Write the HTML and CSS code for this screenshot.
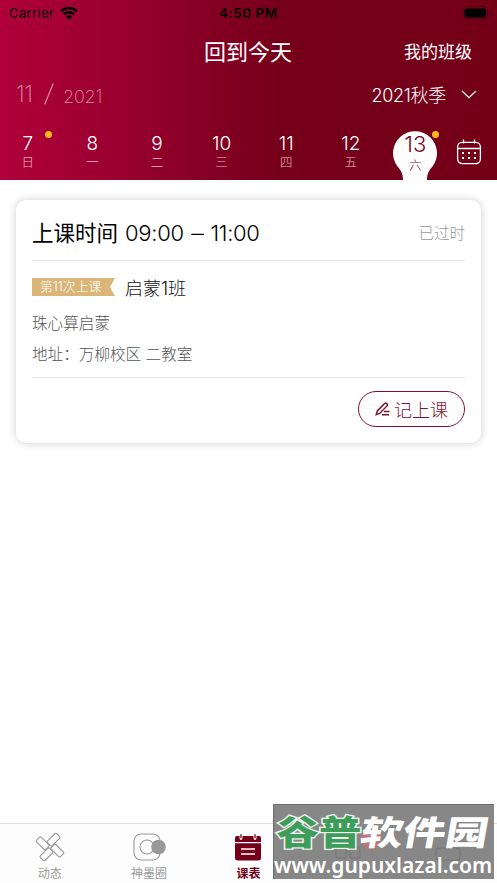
FILE: index.html
```html
<!DOCTYPE html>
<html lang="zh-CN">
<head>
<meta charset="utf-8">
<title>课表</title>
<link rel="stylesheet" href="styles.css">
</head>
<body>
<div class="app">
  <header class="header">
    <div class="status">
      <div class="carrier"><span>Carrier</span>
        <svg width="18" height="14" viewBox="0 0 18 14"><g fill="none" stroke="#000" stroke-width="2.600"><path d="M1 5.200a11.500 11.500 0 0 1 16 0"/><path d="M3.900 8.500a7.300 7.300 0 0 1 10.200 0"/></g><path d="M6 10.700a4.300 4.300 0 0 1 6 0L9 13.700z"/></svg>
      </div>
      <div class="clock">4:50 PM</div>
      <svg class="battery" width="29" height="14" viewBox="0 0 29 14"><rect x=".6" y=".6" width="25" height="12.400" rx="3.600" fill="none" stroke="#4c0010"/><rect x="2.500" y="2.400" width="21.500" height="9" rx="2"/><path d="M27.300 5v4q1.500-.6 1.500-2t-1.500-2" fill="#4c0010"/></svg>
    </div>
    <div class="titlebar"><h1>回到今天</h1><span class="myclass">我的班级</span></div>
    <div class="monthbar">
      <div class="month"><span class="m">11</span><svg width="10" height="22" viewBox="0 0 10 22"><path d="M.7 21.500 9.200.5" stroke="#d98ca3" stroke-width="1.200"/></svg><span class="y">2021</span></div>
      <div class="term"><span>2021秋季</span><svg width="16" height="9" viewBox="0 0 16 9"><path d="m1 1 7 6.700L15 1" fill="none" stroke="#fff" stroke-width="1.200"/></svg></div>
    </div>
    <div class="days">
      <div class="day"><b>7</b><i>日</i><span class="dot"></span></div>
      <div class="day"><b>8</b><i>一</i></div>
      <div class="day"><b>9</b><i>二</i></div>
      <div class="day"><b>10</b><i>三</i></div>
      <div class="day"><b>11</b><i>四</i></div>
      <div class="day"><b>12</b><i>五</i></div>
      <div class="day selected"><svg class="bubble" width="46" height="50" viewBox="0 0 46 50"><path d="M11 50C11 43 8.500 40 5.500 36.500A22 22 0 1 1 40.500 36.500C37.500 40 35 43 35 50Z" fill="#fff"/></svg><b>13</b><i>六</i><span class="dot"></span></div>
      <svg class="cal" width="26" height="26" viewBox="0 0 26 26"><g fill="none" stroke="#fff" stroke-width="1.300"><rect x="1.600" y="3.400" width="22.800" height="21.200" rx="4.500"/><path d="M1.600 9.500h22.800M7.500.6v4M18.500.6v4"/></g><g fill="#fff"><path d="M6 13h2v2H6zM12 13h2v2h-2zM18 13h2v2h-2zM6 18h2v2H6zM12 18h2v2h-2zM18 18h2v2h-2z"/></g></svg>
    </div>
  </header>
  <main class="content">
    <section class="card">
      <div class="time"><h2><span class="zh">上课时间</span>09:00<span class="dash">–</span>11:00</h2><span class="past">已过时</span></div>
      <div class="info">
        <div class="course"><span class="tag">第11次上课</span><span class="name">启蒙1班</span></div>
        <p>珠心算启蒙</p>
        <p>地址：万柳校区 二教室</p>
      </div>
      <div class="actions"><button class="record"><svg width="15" height="14" viewBox="0 0 15 14"><g fill="none" stroke="#7d1230" stroke-width="1.500"><path d="M1.200 12.600 2.300 8.900 9.600 1.500Q10.600.6 11.700 1.600T12 3.900L4.700 11.400ZM9 9.500h5.500M6.800 12.800H14"/></g></svg>记上课</button></div>
    </section>
  </main>
  <nav class="tabs">
    <div class="tab"><svg width="30" height="30" viewBox="0 0 30 30"><g fill="none" stroke="#999" stroke-width="1.100"><rect x="-6.500" y="-3.300" width="13" height="6.600" rx="1.400" transform="translate(7.700 11.300) rotate(45)"/><rect x="-6.500" y="-3.300" width="13" height="6.600" rx="1.400" transform="translate(18.500 7.700) rotate(-45)"/><rect x="-6.500" y="-3.300" width="13" height="6.600" rx="1.400" transform="translate(22.300 18.700) rotate(45)"/><rect x="-6.500" y="-3.300" width="13" height="6.600" rx="1.400" transform="translate(11.500 22.300) rotate(-45)"/></g></svg><span>动态</span></div>
    <div class="tab"><svg width="34" height="30" viewBox="0 0 34 30"><g fill="none" stroke="#999" stroke-width="1.100"><rect x="2" y="2" width="26" height="26" rx="7"/><circle cx="15" cy="15" r="7"/></g><circle cx="26.500" cy="15" r="7.300" fill="#999"/></svg><span>神墨圈</span></div>
    <div class="tab active"><svg width="28" height="30" viewBox="0 0 28 30"><path d="M3 4h2.500v2q0 2 1.500 2t1.500-2V4h11v2q0 2 1.500 2t1.500-2V4H25q2 0 2 2v4H1V6q0-2 2-2M1 11.200h26V26q0 2.500-3 2.500H4q-3 0-3-2.500z" fill="#76001a"/><path d="M7 2.200v4M21 2.200v4" stroke="#76001a" stroke-width="1.300"/><path d="M7 17h14M7 22h14" stroke="#fff" stroke-width="1.300"/></svg><span>课表</span></div>
    <div class="tab"></div>
    <div class="tab"></div>
  </nav>
  <div class="watermark">
    <svg class="ghost" width="221" height="75" viewBox="0 0 221 75"><g fill="none" stroke="#777" stroke-width="1.200"><rect x="62" y="30" width="10" height="10" rx="2"/><rect x="62" y="43" width="10" height="10" rx="2"/><rect x="76" y="43" width="10" height="10" rx="2"/><rect x="162" y="43" width="24" height="12" rx="3"/></g><circle cx="97" cy="34" r="10.500" fill="#b87777"/></svg>
    <div class="brand"><span class="green">谷普</span><span class="white">软件园</span></div>
    <div class="url">www.gupuxlazal.com</div>
  </div>
</div>
</body>
</html>
```
FILE: styles.css
```css
* { box-sizing: border-box; }
body { margin: 0; background: #fff; font-family: Inter, "Noto Sans CJK SC", sans-serif; font-weight: 300; }
h1, h2, p { margin: 0; font-weight: 300; }
svg { display: block; flex: none; }
.app { position: relative; width: 497px; height: 883px; display: flex; flex-direction: column; overflow: hidden; }
.header { height: 180px; flex: none; background: linear-gradient(90deg, #b0003b 0%, #99002f 24%, #76001a 56%, #740018 100%); color: #fff; }
.status { height: 26px; padding: 0 6px 0 9px; display: grid; grid-template-columns: 210px 1fr auto; align-items: center; color: #000; font-size: 13px; font-weight: 400; }
.carrier { display: flex; gap: 6px; align-items: center; letter-spacing: .4px; }
.clock { font-weight: 600; font-size: 13.500px; letter-spacing: .5px; }
.battery { justify-self: end; }
.titlebar { height: 52px; padding-right: 25px; display: grid; grid-template-columns: 204px 1fr auto; align-items: center; }
.titlebar h1 { grid-column: 2; font-size: 22px; line-height: 52px; font-weight: 400; }
.myclass { font-size: 17px; font-weight: 400; line-height: 52px; align-self: start; }
.monthbar { height: 34px; padding: 0 20px 2px 16px; display: flex; justify-content: space-between; align-items: center; }
.month { display: flex; align-items: center; color: #d98ca3; font-weight: 200; }
.m { font-size: 23px; width: 28px; letter-spacing: -.5px; }
.y { font-size: 18px; margin: 4px 0 0 9px; letter-spacing: -.2px; }
.term { display: flex; align-items: center; gap: 15px; font-size: 18px; letter-spacing: -.3px; }
.days { height: 68px; padding: 19px 6px 0 0; margin-left: -4.500px; display: grid; grid-template-columns: repeat(7, 64.600px) 1fr; }
.day { position: relative; display: flex; flex-direction: column; align-items: center; }
.day b { font-size: 19px; line-height: 25px; font-weight: 350; position: relative; }
.day i { font-size: 12.500px; line-height: 13px; font-style: normal; color: #e6bac6; position: relative; }
.dot { position: absolute; left: 49px; top: 0; width: 7px; height: 7px; border-radius: 50%; background: #fcb81c; }
.bubble { position: absolute; left: 9px; top: -1px; }
.selected { color: #76001a; }
.selected b { font-size: 22px; line-height: 27px; }
.selected i { color: #76001a; line-height: 16px; }
.cal { justify-self: center; margin-top: 8px; }
.content { flex: 1; padding: 20px 16px; }
.card { height: 243px; padding: 0 16px; border-radius: 10px; background: #fff; box-shadow: 0 0 9px rgba(0,0,0,.2); color: #333; }
.time { height: 61px; padding-top: 3px; border-bottom: 1px solid #e6e6e6; display: flex; justify-content: space-between; align-items: center; }
.time h2 { font-size: 22px; color: #000; font-weight: 350; letter-spacing: -.3px; }
.zh { font-size: 21.500px; font-weight: 400; margin-right: 7px; letter-spacing: 0; }
.dash { display: inline-block; margin: 0 8px; transform: scaleX(1.150); }
.past { font-size: 15.500px; color: #999; }
.info { height: 117px; padding-top: 13px; border-bottom: 1px solid #e6e6e6; }
.course { display: flex; align-items: center; height: 26px; gap: 10px; margin-bottom: 8px; }
.tag { width: 83px; height: 18px; padding-left: 8px; font-size: 12.800px; line-height: 18px; color: #fff; background: #d9b577; clip-path: polygon(0 0, 100% 0, 94% 50%, 100% 100%, 0 100%); white-space: nowrap; }
.name { font-size: 18px; color: #111; }
.info p { font-size: 15.600px; line-height: 31px; color: #555; }
.actions { display: flex; justify-content: flex-end; padding-top: 13px; }
.record { width: 107px; height: 36px; padding: 0; display: flex; align-items: center; justify-content: center; gap: 4px; border: 1.300px solid #7d1230; border-radius: 18px; background: #fff; color: #7d1230; font: 300 18px Inter, "Noto Sans CJK SC", sans-serif; }
.tabs { height: 60px; flex: none; padding-top: 8px; border-top: 1px solid #ddd; background: #fdfdfd; display: grid; grid-template-columns: repeat(5, 1fr); font-size: 12px; font-weight: 400; color: #999; }
.tab { display: flex; flex-direction: column; align-items: center; gap: 3px; }
.tab span { line-height: 18px; }
.active { color: #76001a; font-weight: 700; }
.watermark { position: absolute; left: 273px; top: 804px; width: 221px; height: 75px; background: #878787; border-top: 1px solid #6e6e6e; border-left: 1px solid #6e6e6e; color: #fff; }
.ghost { position: absolute; left: 0; top: 0; }
.brand { position: relative; width: 174px; height: 48px; padding-left: 2px; font: 900 34px/52px "Noto Sans CJK SC", sans-serif; display: flex; white-space: nowrap; transform: scaleX(1.250); transform-origin: 0 0; }
.green { color: #3f9d5c; -webkit-text-stroke: 2.500px #eef5ef; paint-order: stroke fill; }
.white { transform: skewX(-8deg); }
.url { position: relative; font: 600 21px/24px "Noto Sans", sans-serif; white-space: nowrap; }
```
